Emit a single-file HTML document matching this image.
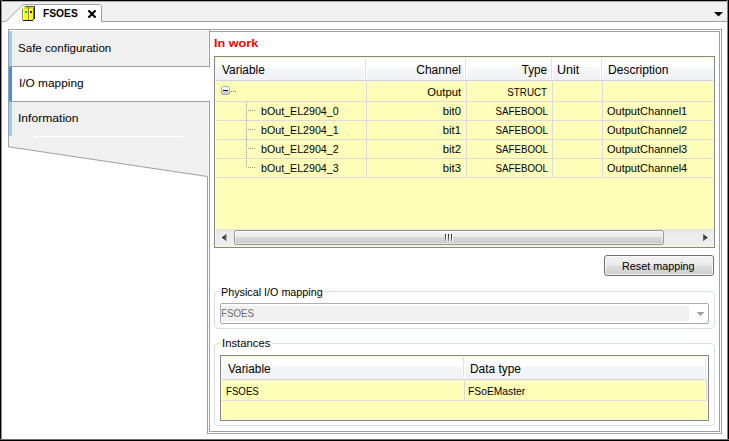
<!DOCTYPE html>
<html>
<head>
<meta charset="utf-8">
<title>FSOES</title>
<style>
html,body{margin:0;padding:0;}
body{width:729px;height:441px;overflow:hidden;background:#fff;position:relative;
  font-family:"Liberation Sans",sans-serif;font-size:11px;color:#000;}
.abs{position:absolute;}
.t{position:absolute;white-space:nowrap;line-height:13px;height:13px;font-size:11px;}
.h{position:absolute;white-space:nowrap;line-height:14px;height:14px;font-size:12px;}
.r{text-align:right;}
#frame div{position:absolute;}
.vline{position:absolute;width:1px;}
.hline{position:absolute;height:1px;}
.yellow{background:#ffffb9;}
.hdr{position:absolute;background:linear-gradient(#ffffff 0,#ffffff 9px,#f6f7f9 9px,#f0f1f4 100%);}
</style>
</head>
<body>

<!-- tab bar background -->
<div class="abs" style="left:0;top:0;width:729px;height:21px;background:#f0f0f0;"></div>

<!-- main line-work -->
<svg class="abs" style="left:0;top:0;" width="729" height="441" viewBox="0 0 729 441">
  <defs>
    <linearGradient id="tabg" x1="0" y1="0" x2="0" y2="1">
      <stop offset="0" stop-color="#ffffff"/><stop offset="1" stop-color="#fbfbfb"/>
    </linearGradient>
    <linearGradient id="hl" x1="0" y1="0" x2="1" y2="0">
      <stop offset="0" stop-color="#ffffff" stop-opacity="0"/>
      <stop offset="0.15" stop-color="#ffffff" stop-opacity="1"/>
      <stop offset="0.85" stop-color="#ffffff" stop-opacity="1"/>
      <stop offset="1" stop-color="#ffffff" stop-opacity="0"/>
    </linearGradient>
  </defs>
  <!-- document tab -->
  <path d="M2 21.5 L4 21.5 Q6 21.5 7.5 20 L21 6.5 Q22.5 4.5 25 4.5 L99.500 4.5 Q101.5 4.5 101.5 6.5 L101.5 21.5 L727 21.5 L727 23 L2 23 Z" fill="url(#tabg)" stroke="none"/>
  <path d="M2 21.5 L4 21.5 Q6 21.5 7.5 20 L21 6.5 Q22.5 4.5 25 4.500 L99.500 4.500 Q101.500 4.500 101.500 6.500 L101.500 21.500 L727 21.500" fill="none" stroke="#a0a0a0" stroke-width="1"/>
  <!-- tab bar dropdown arrow -->
  <path d="M714 12 L723 12 L718.500 16.500 Z" fill="#000"/>

  <!-- right panel double border -->
  <rect x="207.500" y="29.500" width="514" height="404" fill="none" stroke="#a0a0a0"/>
  <rect x="209.500" y="31.500" width="510" height="400" fill="none" stroke="#a0a0a0"/>

  <!-- left tab strip -->
  <polygon points="9,30 209,30 209,177 208,177 9,147" fill="#f0f0f0"/>
  <rect x="9" y="30" width="200" height="1" fill="#ffffff"/>
  <rect x="208" y="31" width="1" height="145" fill="#f8f8f8"/>
  <line x1="8" y1="29.500" x2="210" y2="29.500" stroke="#a0a0a0"/>
  <line x1="8.500" y1="29" x2="8.500" y2="147" stroke="#a0a0a0"/>
  <line x1="8.500" y1="146.800" x2="207.500" y2="176.500" stroke="#a0a0a0"/>
  <line x1="209.500" y1="30" x2="209.500" y2="180" stroke="#a0a0a0"/>
  <!-- selected tab -->
  <rect x="9" y="67" width="203" height="34" fill="#ffffff"/>
  <line x1="9" y1="66.500" x2="210" y2="66.500" stroke="#a0a0a0"/>
  <line x1="9" y1="101.500" x2="210" y2="101.500" stroke="#a0a0a0"/>
  <!-- blue markers -->
  <rect x="9" y="31" width="3" height="35" fill="#99ccff"/>
  <rect x="9" y="67" width="3" height="34" fill="#3394ff"/>
  <rect x="9" y="102" width="3" height="34" fill="#99ccff"/>
  <!-- highlight line -->
  <rect x="34" y="136" width="149" height="1" fill="#ffffff"/>
</svg>

<!-- document tab icon -->
<svg class="abs" style="left:21px;top:5px;" width="16" height="17" viewBox="21 5 16 17" shape-rendering="crispEdges">
  <rect x="25" y="6" width="10" height="1" fill="#505050"/>
  <rect x="24" y="7" width="10" height="1" fill="#dcdc00"/>
  <rect x="23" y="8" width="10" height="1" fill="#dcdc00"/>
  <rect x="23" y="9" width="10" height="11" fill="#ffff00"/>
  <rect x="22" y="9" width="1" height="11" fill="#808080"/>
  <rect x="23" y="9" width="1" height="11" fill="#ffffff"/>
  <rect x="28" y="7" width="1" height="13" fill="#808080"/>
  <rect x="29" y="9" width="1" height="11" fill="#ffff80"/>
  <rect x="33" y="8" width="1" height="12" fill="#808000"/>
  <rect x="34" y="7" width="1" height="12" fill="#202020"/>
  <rect x="23" y="20" width="10" height="1" fill="#101010"/>
  <rect x="33" y="19" width="1" height="1" fill="#303030"/>
  <rect x="25" y="11" width="2" height="2" fill="#00d800"/>
  <rect x="30" y="11" width="2" height="2" fill="#a00000"/>
</svg>
<div class="t" id="tabtitle" style="left:43.31px;top:7px;font-weight:bold;transform:scaleX(0.933);transform-origin:0% 50%;">FSOES</div>
<svg class="abs" style="left:88px;top:10px;" width="8" height="8" viewBox="0 0 8 8">
  <path d="M1.100 1.100 L6.900 6.900 M6.900 1.100 L1.100 6.900" stroke="#000" stroke-width="2.100" stroke-linecap="square" fill="none"/>
</svg>

<!-- left tabs text -->
<div class="t" id="lt1" style="left:18.11px;top:42px;transform:scaleX(1.052);transform-origin:0% 50%;">Safe configuration</div>
<div class="t" id="lt2" style="left:18.96px;top:77px;transform:scaleX(1.078);transform-origin:0% 50%;">I/O mapping</div>
<div class="t" id="lt3" style="left:18.30px;top:112px;transform:scaleX(1.101);transform-origin:0% 50%;">Information</div>

<!-- In work -->
<div class="t" id="inwork" style="left:213.78px;top:37px;font-weight:bold;color:#ff0000;transform:scaleX(1.150);transform-origin:0% 50%;">In work</div>

<!-- main table -->
<div class="abs yellow" style="left:214px;top:56px;width:499px;height:190px;border:1px solid #828790;"></div>
<div class="hdr" style="left:216px;top:58px;width:497px;height:22px;"></div>
<div class="hline" style="left:216px;top:80px;width:497px;background:#d5d5d5;"></div>
<div class="hline" style="left:216px;top:81px;width:497px;background:#f4f4e0;"></div>
<!-- header separators -->
<div class="vline" style="left:364px;top:58px;height:22px;width:3px;background:#ffffff;"></div><div class="vline" style="left:365px;top:58px;height:22px;background:#dfe0e5;"></div>
<div class="vline" style="left:464px;top:58px;height:22px;width:3px;background:#ffffff;"></div><div class="vline" style="left:465px;top:58px;height:22px;background:#dfe0e5;"></div>
<div class="vline" style="left:550px;top:58px;height:22px;width:3px;background:#ffffff;"></div><div class="vline" style="left:551px;top:58px;height:22px;background:#dfe0e5;"></div>
<div class="vline" style="left:600px;top:58px;height:22px;width:3px;background:#ffffff;"></div><div class="vline" style="left:601px;top:58px;height:22px;background:#dfe0e5;"></div>
<!-- grid verticals -->
<div class="vline" style="left:366px;top:82px;height:95px;background:#dadada;"></div>
<div class="vline" style="left:466px;top:82px;height:95px;background:#dadada;"></div>
<div class="vline" style="left:552px;top:82px;height:95px;background:#dadada;"></div>
<div class="vline" style="left:602px;top:82px;height:95px;background:#dadada;"></div>
<!-- grid horizontals -->
<div class="hline" style="left:216px;top:101px;width:497px;background:#dcdcdc;"></div>
<div class="hline" style="left:216px;top:120px;width:497px;background:#dcdcdc;"></div>
<div class="hline" style="left:216px;top:139px;width:497px;background:#dcdcdc;"></div>
<div class="hline" style="left:216px;top:158px;width:497px;background:#dcdcdc;"></div>
<div class="hline" style="left:216px;top:177px;width:497px;background:#dcdcdc;"></div>

<!-- header text -->
<div class="h" id="h1" style="left:222.16px;top:63px;transform:scaleX(0.992);transform-origin:0% 50%;">Variable</div>
<div class="h r" id="h2" style="left:381.03px;width:80px;top:63px;transform:scaleX(1.002);transform-origin:100% 50%;">Channel</div>
<div class="h r" id="h3" style="left:480.84px;width:66px;top:63px;transform:scaleX(0.970);transform-origin:100% 50%;">Type</div>
<div class="h" id="h4" style="left:557.49px;top:63px;transform:scaleX(1.044);transform-origin:0% 50%;">Unit</div>
<div class="h" id="h5" style="left:607.51px;top:63px;transform:scaleX(1.006);transform-origin:0% 50%;">Description</div>

<!-- tree glyphs -->
<svg class="abs" style="left:216px;top:82px;" width="60" height="96" viewBox="216 82 60 96" shape-rendering="crispEdges">
  <defs><linearGradient id="eb" x1="0" y1="0" x2="0" y2="1"><stop offset="0" stop-color="#ffffff"/><stop offset="0.55" stop-color="#f4f4f4"/><stop offset="0.6" stop-color="#d6d6d6"/><stop offset="1" stop-color="#c4c4c4"/></linearGradient>
  <linearGradient id="es" x1="0" y1="0" x2="0" y2="1"><stop offset="0" stop-color="#86c4cc"/><stop offset="0.6" stop-color="#8cc0c8"/><stop offset="1" stop-color="#b0b0b0"/></linearGradient></defs>
  <rect x="221.500" y="86.500" width="8" height="8" rx="1.500" fill="url(#eb)" stroke="url(#es)" shape-rendering="auto"/>
  <rect x="223" y="90" width="5" height="1" fill="#000"/>
  <g fill="#707070">
    <rect x="231" y="91" width="1" height="1"/><rect x="233" y="91" width="1" height="1"/><rect x="235" y="91" width="1" height="1"/>
  </g>
  <line x1="246.500" y1="102" x2="246.500" y2="168" stroke="#9a9a9a" stroke-dasharray="1,1"/>
  <line x1="248" y1="110.500" x2="256" y2="110.500" stroke="#9a9a9a" stroke-dasharray="1,1"/>
  <line x1="248" y1="129.500" x2="256" y2="129.500" stroke="#9a9a9a" stroke-dasharray="1,1"/>
  <line x1="248" y1="148.500" x2="256" y2="148.500" stroke="#9a9a9a" stroke-dasharray="1,1"/>
  <line x1="248" y1="167.500" x2="256" y2="167.500" stroke="#9a9a9a" stroke-dasharray="1,1"/>
</svg>

<!-- rows text -->
<div class="t r" id="r0c" style="left:380.25px;width:81px;top:86px;transform:scaleX(1.019);transform-origin:100% 50%;">Output</div>
<div class="t r" id="r0t" style="left:470.03px;width:77px;top:86px;transform:scaleX(0.890);transform-origin:100% 50%;">STRUCT</div>

<div class="t" id="r1v" style="left:260.56px;top:105px;transform:scaleX(0.969);transform-origin:0% 50%;">bOut_EL2904_0</div>
<div class="t r" id="r1c" style="left:380.47px;width:81px;top:105px;transform:scaleX(1.023);transform-origin:100% 50%;">bit0</div>
<div class="t r" id="r1t" style="left:470.60px;width:77px;top:105px;transform:scaleX(0.885);transform-origin:100% 50%;">SAFEBOOL</div>
<div class="t" id="r1d" style="left:606.82px;top:105px;transform:scaleX(1.001);transform-origin:0% 50%;">OutputChannel1</div>

<div class="t" id="r2v" style="left:260.56px;top:124px;transform:scaleX(0.969);transform-origin:0% 50%;">bOut_EL2904_1</div>
<div class="t r" id="r2c" style="left:380.47px;width:81px;top:124px;transform:scaleX(1.023);transform-origin:100% 50%;">bit1</div>
<div class="t r" id="r2t" style="left:470.60px;width:77px;top:124px;transform:scaleX(0.885);transform-origin:100% 50%;">SAFEBOOL</div>
<div class="t" id="r2d" style="left:606.82px;top:124px;transform:scaleX(1.001);transform-origin:0% 50%;">OutputChannel2</div>

<div class="t" id="r3v" style="left:260.56px;top:143px;transform:scaleX(0.969);transform-origin:0% 50%;">bOut_EL2904_2</div>
<div class="t r" id="r3c" style="left:380.47px;width:81px;top:143px;transform:scaleX(1.023);transform-origin:100% 50%;">bit2</div>
<div class="t r" id="r3t" style="left:470.60px;width:77px;top:143px;transform:scaleX(0.885);transform-origin:100% 50%;">SAFEBOOL</div>
<div class="t" id="r3d" style="left:606.82px;top:143px;transform:scaleX(1.001);transform-origin:0% 50%;">OutputChannel3</div>

<div class="t" id="r4v" style="left:260.56px;top:162px;transform:scaleX(0.969);transform-origin:0% 50%;">bOut_EL2904_3</div>
<div class="t r" id="r4c" style="left:380.47px;width:81px;top:162px;transform:scaleX(1.023);transform-origin:100% 50%;">bit3</div>
<div class="t r" id="r4t" style="left:470.60px;width:77px;top:162px;transform:scaleX(0.885);transform-origin:100% 50%;">SAFEBOOL</div>
<div class="t" id="r4d" style="left:606.82px;top:162px;transform:scaleX(1.001);transform-origin:0% 50%;">OutputChannel4</div>

<!-- horizontal scrollbar -->
<div class="abs" style="left:216px;top:229px;width:497px;height:17px;background:linear-gradient(#e4e4e4 0,#eaeaea 3px,#ececec 8px,#efefef 100%);"></div>
<div class="abs" style="left:234px;top:230px;width:428px;height:13px;border:1px solid #979797;border-radius:2.500px;background:linear-gradient(#f5f5f5 0,#e9e9e9 46%,#d9d9d9 50%,#c9c9c9 100%);box-shadow:inset 0 0 0 1px rgba(255,255,255,0.55);"></div>
<svg class="abs" style="left:216px;top:229px;" width="497" height="17" viewBox="216 229 497 17">
  <defs>
    <linearGradient id="ag" x1="0" y1="0" x2="1" y2="0"><stop offset="0" stop-color="#000"/><stop offset="1" stop-color="#707070"/></linearGradient>
    <linearGradient id="ag2" x1="1" y1="0" x2="0" y2="0"><stop offset="0" stop-color="#000"/><stop offset="1" stop-color="#707070"/></linearGradient>
  </defs>
  <path d="M226.500 233.700 L226.500 241.300 L221.800 237.500 Z" fill="url(#ag)"/>
  <path d="M703 233.700 L703 241.300 L707.700 237.500 Z" fill="url(#ag2)"/>
  <linearGradient id="gg" x1="0" y1="0" x2="0" y2="1"><stop offset="0" stop-color="#1c1c1c"/><stop offset="1" stop-color="#8a8a8a"/></linearGradient>
  <g shape-rendering="crispEdges"><rect x="446" y="234" width="1" height="8" fill="#f8f8f8"/><rect x="449" y="234" width="1" height="8" fill="#f8f8f8"/><rect x="452" y="234" width="1" height="8" fill="#f8f8f8"/>
  <rect x="445" y="234" width="1" height="7" fill="url(#gg)"/><rect x="448" y="234" width="1" height="7" fill="url(#gg)"/><rect x="451" y="234" width="1" height="7" fill="url(#gg)"/></g>
</svg>

<!-- Reset mapping button -->
<div class="abs" style="left:604px;top:255px;width:108px;height:19px;border:1px solid #707070;border-radius:3px;background:linear-gradient(#f2f2f2 0,#ebebeb 48%,#dddddd 52%,#cfcfcf 100%);box-shadow:inset 0 0 0 1px rgba(255,255,255,0.7);"></div>
<div class="t" id="btn" style="left:621.56px;top:260px;transform:scaleX(0.981);transform-origin:0% 50%;">Reset mapping</div>

<!-- Group box 1 -->
<div class="abs" style="left:214px;top:291px;width:499px;height:36px;border:1px solid #d5dfe5;border-radius:4px;"></div>
<div class="abs" style="left:220px;top:286px;width:104px;height:12px;background:#fff;"></div>
<div class="t" id="g1" style="left:220.98px;top:285.5px;transform:scaleX(0.978);transform-origin:0% 50%;">Physical I/O mapping</div>
<div class="abs" style="left:220px;top:303px;width:487px;height:19px;border:1px solid #acacac;border-radius:2px;background:#fff;"></div>
<div class="abs" style="left:223px;top:306px;width:466px;height:15px;background:#f0f0f0;"></div>
<div class="t" id="cb" style="left:221.36px;top:307px;color:#6d6d6d;transform:scaleX(0.887);transform-origin:0% 50%;">FSOES</div>
<svg class="abs" style="left:696px;top:311px;" width="9" height="6" viewBox="0 0 9 6"><path d="M0.500 1 L8.500 1 L4.500 5 Z" fill="#a0a0a0"/></svg>

<!-- Group box 2 -->
<div class="abs" style="left:214px;top:343px;width:499px;height:81px;border:1px solid #d5dfe5;border-radius:4px;"></div>
<div class="abs" style="left:220px;top:337px;width:52px;height:12px;background:#fff;"></div>
<div class="t" id="g2" style="left:221.70px;top:337px;transform:scaleX(1.026);transform-origin:0% 50%;">Instances</div>

<div class="abs yellow" style="left:220px;top:355px;width:487px;height:64px;border:1px solid #828790;"></div>
<div class="hdr" style="left:222px;top:357px;width:485px;height:22px;"></div>
<div class="hline" style="left:222px;top:379px;width:485px;background:#d5d5d5;"></div>
<div class="hline" style="left:222px;top:380px;width:485px;background:#f4f4e0;"></div>
<div class="vline" style="left:462px;top:357px;height:22px;width:3px;background:#ffffff;"></div><div class="vline" style="left:463px;top:357px;height:22px;background:#dfe0e5;"></div>
<div class="vline" style="left:704px;top:357px;height:22px;width:3px;background:#ffffff;"></div><div class="vline" style="left:705px;top:357px;height:22px;background:#dfe0e5;"></div>
<div class="vline" style="left:464px;top:381px;height:19px;background:#dadada;"></div>
<div class="vline" style="left:706px;top:381px;height:19px;background:#dadada;"></div>
<div class="hline" style="left:222px;top:400px;width:485px;background:#dcdcdc;"></div>
<div class="h" id="ih1" style="left:227.60px;top:362px;transform:scaleX(0.990);transform-origin:0% 50%;">Variable</div>
<div class="h" id="ih2" style="left:469.95px;top:362px;transform:scaleX(0.992);transform-origin:0% 50%;">Data type</div>
<div class="t" id="i1" style="left:226.20px;top:385px;transform:scaleX(0.880);transform-origin:0% 50%;">FSOES</div>
<div class="t" id="i2" style="left:467.53px;top:385px;transform:scaleX(0.937);transform-origin:0% 50%;">FSoEMaster</div>

<!-- outer window frame -->
<div id="frame">
  <div style="left:0;top:0;width:729px;height:1px;background:#000;"></div>
  <div style="left:0;top:1px;width:729px;height:1px;background:rgba(0,0,0,0.28);"></div>
  <div style="left:0;top:0;width:1px;height:441px;background:#000;"></div>
  <div style="left:1px;top:0;width:1px;height:441px;background:#909090;"></div>
  <div style="left:727px;top:0;width:1px;height:441px;background:#858585;"></div>
  <div style="left:728px;top:0;width:1px;height:441px;background:#000;"></div>
  <div style="left:0;top:439px;width:729px;height:1px;background:#707070;"></div>
  <div style="left:0;top:440px;width:729px;height:1px;background:#000;"></div>
</div>
</body>
</html>
